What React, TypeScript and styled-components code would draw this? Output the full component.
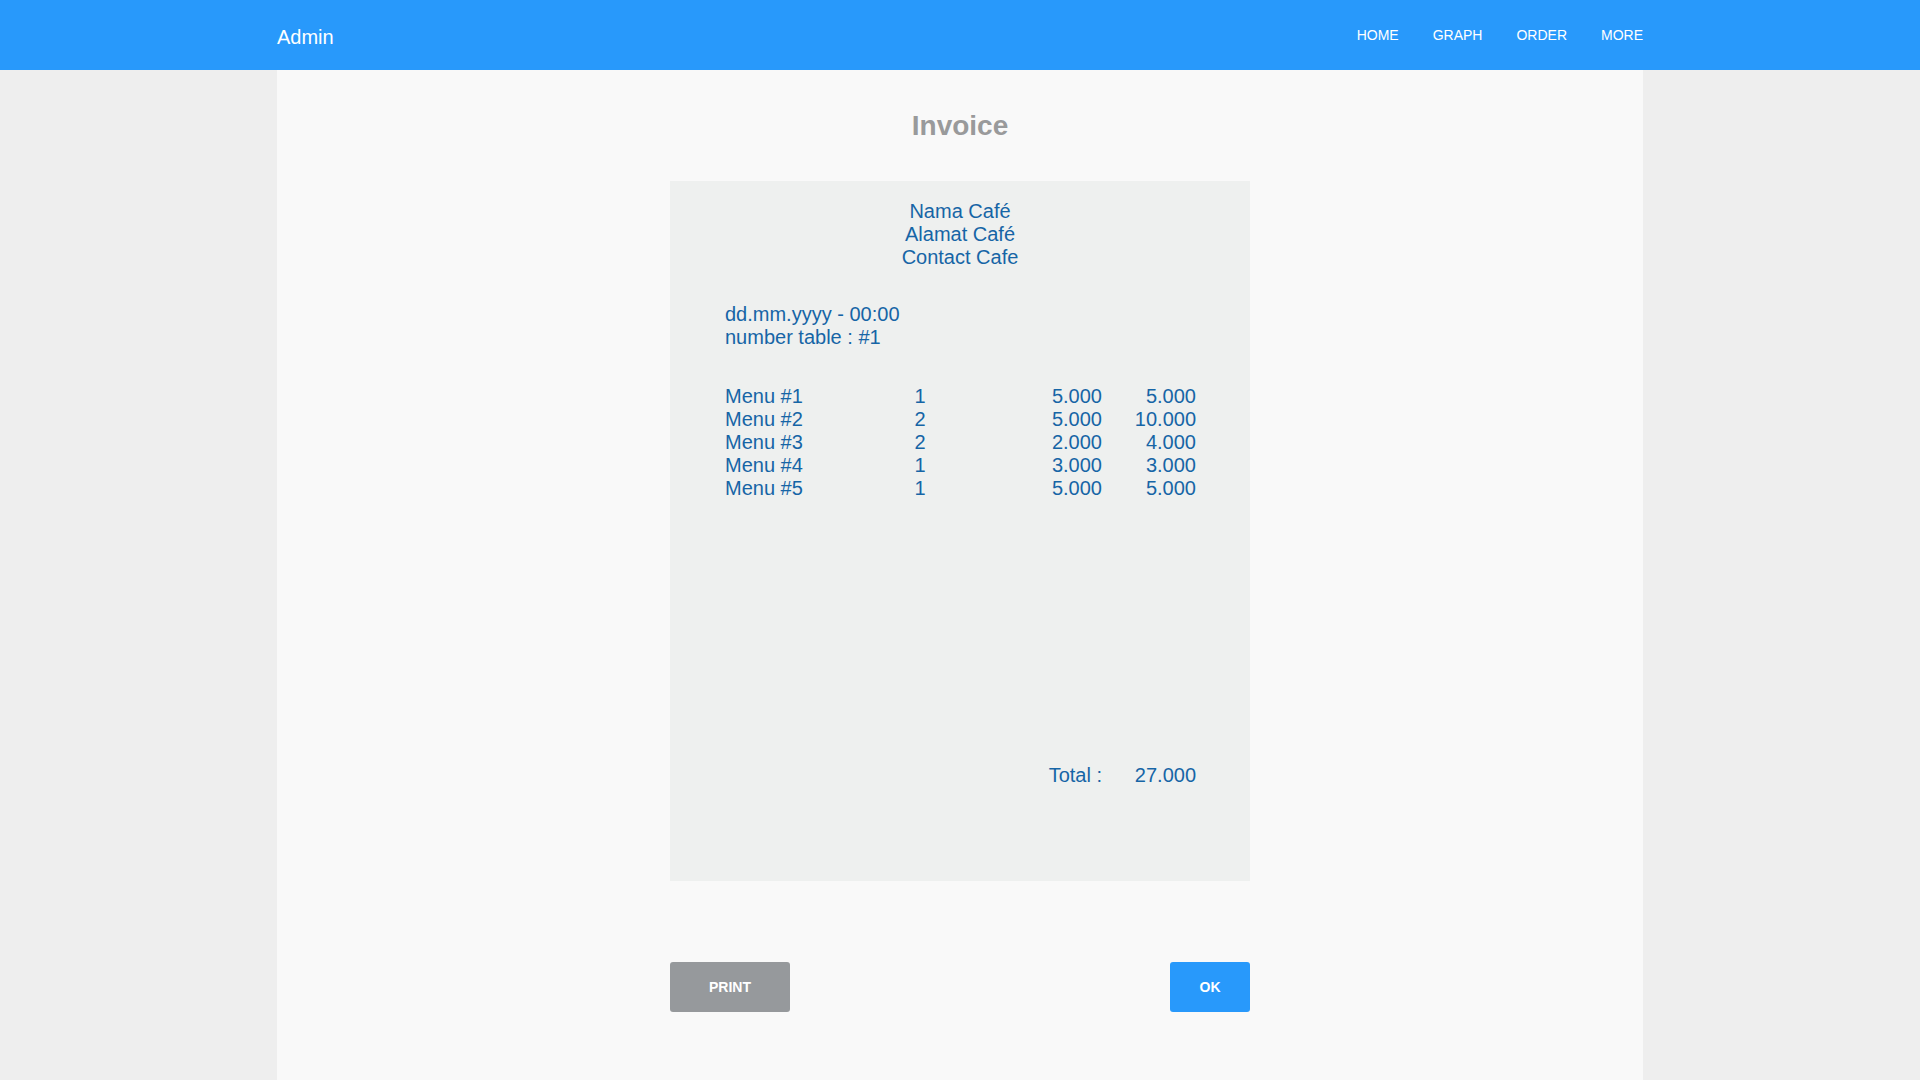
import React from "react";
import styled, { createGlobalStyle } from "styled-components";

const GlobalStyle = createGlobalStyle`
  html, body {
    margin: 0;
    padding: 0;
    background: #eeeeee;
    font-family: "Liberation Sans", Arial, sans-serif;
  }
  #root {
    min-height: 100vh;
    display: flex;
    flex-direction: column;
  }
`;

const Header = styled.header`
  height: 70px;
  background: #2899fb;
  display: flex;
  justify-content: center;
  flex-shrink: 0;
`;

const HeaderInner = styled.div`
  width: 1366px;
  display: flex;
  align-items: center;
  justify-content: space-between;
`;

const Brand = styled.div`
  color: #ffffff;
  font-size: 20px;
  padding-top: 5px;
`;

const Nav = styled.nav`
  display: flex;
  gap: 34px;
  padding-bottom: 1px;
`;

const NavLink = styled.a`
  color: #ffffff;
  font-size: 14px;
  text-decoration: none;
  text-transform: uppercase;
`;

const Main = styled.main`
  flex: 1;
  display: flex;
  justify-content: center;
`;

const Panel = styled.section`
  width: 1366px;
  background: #f9f9f9;
  display: flex;
  flex-direction: column;
  align-items: center;
`;

const Title = styled.h1`
  margin: 40px 0 0;
  font-size: 28px;
  line-height: 32px;
  font-weight: bold;
  color: #999a9b;
`;

const Receipt = styled.div`
  margin-top: 39px;
  width: 580px;
  height: 700px;
  box-sizing: border-box;
  background: #eef0ef;
  padding: 19px 54px 0 55px;
  color: #1665a6;
  font-size: 20px;
  line-height: 23px;
  display: flex;
  flex-direction: column;
`;

const CafeInfo = styled.div`
  text-align: center;
  margin-right: 1px;
`;

const Meta = styled.div`
  margin-top: 34px;
`;

const Items = styled.div`
  margin-top: 36px;
  display: grid;
  grid-template-columns: 160px 70px 147px 94px;
`;

const Cell = styled.div<{ $align?: "left" | "center" | "right" }>`
  text-align: ${(p) => p.$align ?? "left"};
  white-space: nowrap;
`;

const TotalRow = styled.div`
  margin-top: 264px;
  display: grid;
  grid-template-columns: 160px 70px 147px 94px;
`;

const Actions = styled.div`
  width: 580px;
  margin-top: 81px;
  display: flex;
  justify-content: space-between;
`;

const Button = styled.button<{ $variant: "gray" | "blue"; $w: number }>`
  width: ${(p) => p.$w}px;
  height: 50px;
  border: none;
  border-radius: 3px;
  background: ${(p) => (p.$variant === "blue" ? "#2899fb" : "#96999c")};
  color: #ffffff;
  font-family: "Liberation Sans", Arial, sans-serif;
  font-size: 14px;
  font-weight: bold;
  text-transform: uppercase;
  cursor: pointer;
`;

const items = [
  { name: "Menu #1", qty: "1", price: "5.000", total: "5.000" },
  { name: "Menu #2", qty: "2", price: "5.000", total: "10.000" },
  { name: "Menu #3", qty: "2", price: "2.000", total: "4.000" },
  { name: "Menu #4", qty: "1", price: "3.000", total: "3.000" },
  { name: "Menu #5", qty: "1", price: "5.000", total: "5.000" },
];

export default function App() {
  return (
    <>
      <GlobalStyle />
      <Header>
        <HeaderInner>
          <Brand>Admin</Brand>
          <Nav>
            <NavLink href="#">Home</NavLink>
            <NavLink href="#">Graph</NavLink>
            <NavLink href="#">Order</NavLink>
            <NavLink href="#">More</NavLink>
          </Nav>
        </HeaderInner>
      </Header>
      <Main>
        <Panel>
          <Title>Invoice</Title>
          <Receipt>
            <CafeInfo>
              <div>Nama Café</div>
              <div>Alamat Café</div>
              <div>Contact Cafe</div>
            </CafeInfo>
            <Meta>
              <div>dd.mm.yyyy - 00:00</div>
              <div>number table : #1</div>
            </Meta>
            <Items>
              {items.map((it) => (
                <React.Fragment key={it.name}>
                  <Cell>{it.name}</Cell>
                  <Cell $align="center">{it.qty}</Cell>
                  <Cell $align="right">{it.price}</Cell>
                  <Cell $align="right">{it.total}</Cell>
                </React.Fragment>
              ))}
            </Items>
            <TotalRow>
              <Cell />
              <Cell />
              <Cell $align="right">Total :</Cell>
              <Cell $align="right">27.000</Cell>
            </TotalRow>
          </Receipt>
          <Actions>
            <Button $variant="gray" $w={120}>Print</Button>
            <Button $variant="blue" $w={80}>OK</Button>
          </Actions>
        </Panel>
      </Main>
    </>
  );
}
